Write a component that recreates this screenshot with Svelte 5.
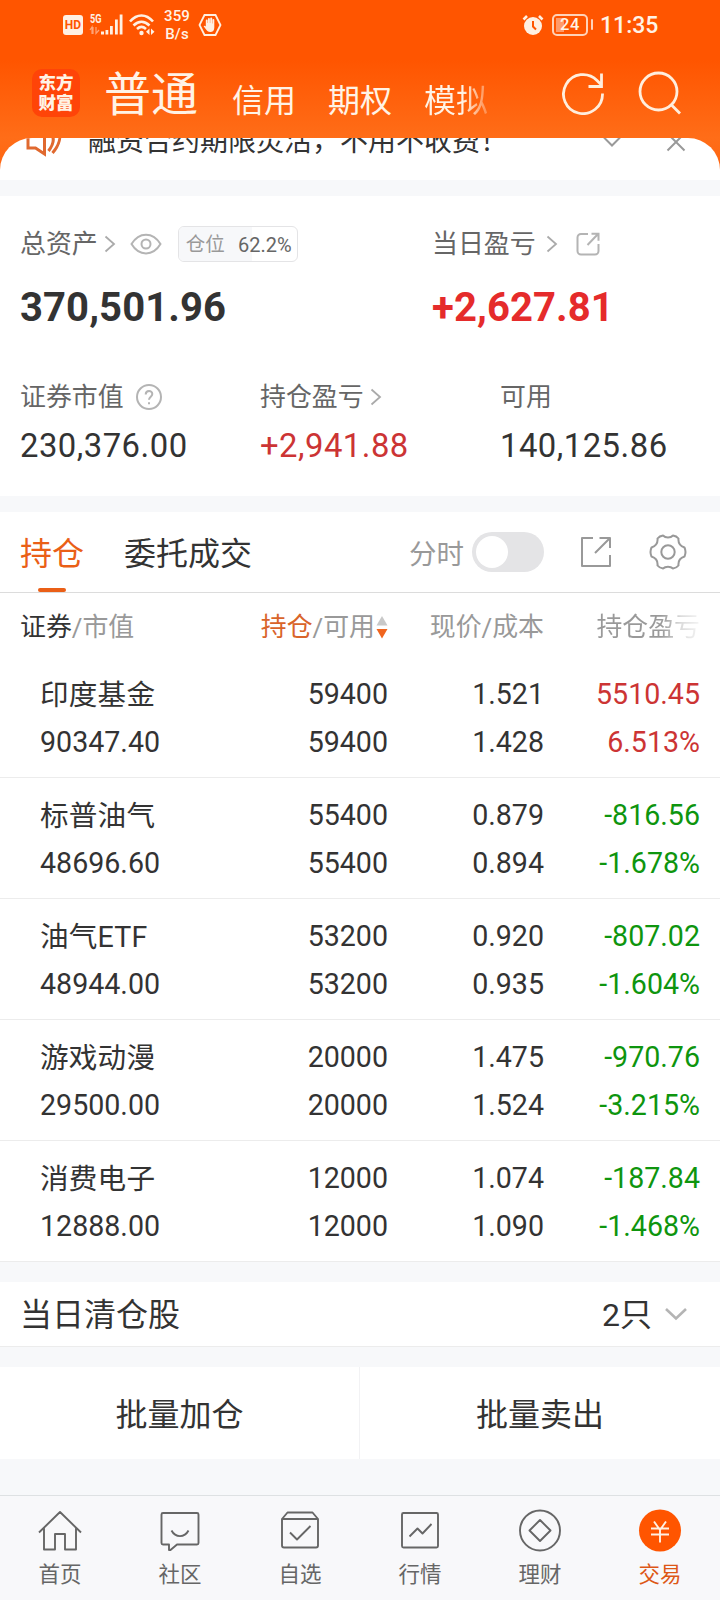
<script lang="ts">
  type Holding = {
    name: string;
    value: string;
    amount: string;
    available: string;
    price: string;
    cost: string;
    profit: string;
    percent: string;
  };

  const accounts = ["信用", "期权", "模拟"];
  const ratio = 62.2;

  const holdings: Holding[] = [
    { name: "印度基金", value: "90347.40", amount: "59400", available: "59400", price: "1.521", cost: "1.428", profit: "5510.45", percent: "6.513%" },
    { name: "标普油气", value: "48696.60", amount: "55400", available: "55400", price: "0.879", cost: "0.894", profit: "-816.56", percent: "-1.678%" },
    { name: "油气ETF", value: "48944.00", amount: "53200", available: "53200", price: "0.920", cost: "0.935", profit: "-807.02", percent: "-1.604%" },
    { name: "游戏动漫", value: "29500.00", amount: "20000", available: "20000", price: "1.475", cost: "1.524", profit: "-970.76", percent: "-3.215%" },
    { name: "消费电子", value: "12888.00", amount: "12000", available: "12000", price: "1.074", cost: "1.090", profit: "-187.84", percent: "-1.468%" },
  ];

  const navItems = [
    { id: "home", label: "首页" },
    { id: "community", label: "社区" },
    { id: "watchlist", label: "自选" },
    { id: "market", label: "行情" },
    { id: "wealth", label: "理财" },
    { id: "trade", label: "交易" },
  ];

  let current = "trade";
  let showChart = false;
</script>

{#snippet arrow()}
  <svg class="arrow" width="12" height="18" viewBox="0 0 12 18">
    <path d="M1.5 1.5 10 9l-8.500 7.500" />
  </svg>
{/snippet}

<div class="page">
  <header class="header">
    <div class="status">
      <div class="status-left">
        <span class="hd">HD</span>
        <svg class="signal" width="34" height="24" viewBox="0 0 34 24">
          <text x="0" y="10" font-size="12.500" font-weight="700" textLength="11.500" lengthAdjust="spacingAndGlyphs">5G</text>
          <path class="dim" d="M0 17l2-3v6.500h1v-6.500M6 14v6.500l3-3.500" />
          <path d="M11 18.500h3v3h-3zM15.500 17h2.800v4.500h-2.800zM20 13h2.800v8.500h-2.800zM25 6.500h2.800v15H25zM29.700 1.500h2.800v20h-2.800z" />
        </svg>
        <svg class="wifi" width="26" height="22" viewBox="0 0 26 22">
          <path class="line" d="M1 7.500C8-.5 17-.5 24 7.500M4.500 11.500c5-5 11-5 16 0M8 15c3-2.700 6-2.700 9 0" />
          <circle cx="12.500" cy="19" r="2.200" />
          <path d="M20.500 14.500v6.500L17 17.800zM22 14.500v6.500l3.500-3.200z" />
        </svg>
        <span class="speed"><span>359</span><span>B/s</span></span>
        <svg class="hand" width="24" height="24" viewBox="0 0 24 24">
          <path class="line thin" d="M6.500 2h11L22.500 12l-5 10h-11L1.500 12z" />
          <path d="M7.800 12.500V7.500a.9.900 0 0 1 1.800 0V10h.3V6a1 1 0 0 1 2 0v4h.3V5.500a1 1 0 0 1 2 0V10.500h.3V7a.9.900 0 0 1 1.800 0V14.500c0 3-1.500 4.500-4 4.500-2.200 0-3.200-1-4.200-2.500L5.600 13.300c.5-1 1.500-.8 2.200.2z" />
        </svg>
      </div>
      <div class="status-right">
        <svg width="22" height="22" viewBox="0 0 22 22">
          <circle cx="11" cy="12" r="9" />
          <path class="line" d="M1.500 5.500 5 2M17 2l3.500 3.500" />
          <path class="hands" d="M11 7v5.500l3 3" />
        </svg>
        <span class="battery">24</span>
        <span class="tip"></span>
        <span class="time">11:35</span>
      </div>
    </div>
    <div class="title-bar">
      <div class="logo"><span>东方</span><span>财富</span></div>
      <nav class="accounts">
        <span class="account active">普通</span>
        {#each accounts as account}
          <span class="account">{account}</span>
        {/each}
      </nav>
      <svg width="44" height="44" viewBox="0 0 44 44">
        <path class="icon-line" d="M40.500 22.500A19.500 19.500 0 1 1 35 9.500l4.500 4.500M26.500 15.500H39.500V2.500" />
      </svg>
      <svg class="search" width="44" height="46" viewBox="0 0 44 46">
        <circle class="icon-line" cx="20.500" cy="21.500" r="18.500" />
        <path class="icon-line" d="M33.500 35l8.500 8.500" />
      </svg>
    </div>
  </header>

  <div class="notice-wrap">
    <div class="notice">
      <div class="notice-row">
        <svg width="36" height="32" viewBox="0 0 36 32">
          <path class="speaker" d="M2 6h7.500l9-6v28l-9-6H2zM24 7c4.500 4 4.500 10-1.500 18M32.500 3c3 7 1 16-6 24" />
        </svg>
        <p>融资合约期限灵活，不用不收费！</p>
        <svg class="grey fold" width="18" height="12" viewBox="0 0 18 12"><path d="M1 1.500l8 8 8-8" /></svg>
        <svg class="grey" width="20" height="20" viewBox="0 0 20 20"><path d="M1.500 1.500l17 17M18.500 1.500l-17 17" /></svg>
      </div>
    </div>
  </div>

  <section class="summary">
    <div class="totals">
      <div>
        <div class="label">
          总资产{@render arrow()}
          <svg class="eye" width="32" height="22" viewBox="0 0 32 22">
            <path d="M1.500 11C9-1.500 23-1.500 30.500 11 23 23.500 9 23.500 1.500 11z" />
            <circle cx="16" cy="11" r="4.500" />
          </svg>
          <span class="position">
            <span class="fill" style="width: {ratio}%"></span>
            <em>仓位</em><b>{ratio}%</b>
          </span>
        </div>
        <div class="total">370,501.96</div>
      </div>
      <div>
        <div class="label daily">
          当日盈亏{@render arrow()}
          <svg class="share" width="24" height="24" viewBox="0 0 24 24">
            <path d="M12 2H5a3.500 3.500 0 0 0-3.500 3.500v13.500A3.500 3.500 0 0 0 5 22.500h14a3.500 3.500 0 0 0 3.500-3.500v-7M11.500 13 22 2M15.500 1.700h7v7" />
          </svg>
        </div>
        <div class="total up">+2,627.81</div>
      </div>
    </div>
    <div class="details">
      <div>
        <div class="label">
          证券市值
          <svg class="help" width="26" height="26" viewBox="0 0 26 26">
            <circle cx="13" cy="13" r="12" />
            <path d="M9.700 10.500c0-4.500 6.600-4.500 6.600-.5 0 2.500-3.300 3-3.300 5.800M13 18.300v2" />
          </svg>
        </div>
        <div class="number">230,376.00</div>
      </div>
      <div>
        <div class="label">持仓盈亏{@render arrow()}</div>
        <div class="number up">+2,941.88</div>
      </div>
      <div>
        <div class="label">可用</div>
        <div class="number">140,125.86</div>
      </div>
    </div>
  </section>

  <section class="positions">
    <div class="tabs">
      <span class="tab selected">持仓</span>
      <span class="tab">委托成交</span>
      <span class="chart-label">分时</span>
      <button
        class="switch"
        class:on={showChart}
        aria-label="分时"
        on:click={() => (showChart = !showChart)}
      ></button>
      <svg class="tool" width="32" height="32" viewBox="0 0 32 32">
        <path d="M13 2H2v28h28V19M30 12V2H19.500M15 17 29.500 2.500" />
      </svg>
      <svg class="tool gear" width="38" height="38" viewBox="0 0 38 38">
        <path d="M14 2.500C16.500 5 21.500 5 24 2.500Q27.500 3 29.500 5.500C29 10 31 13 35.500 14.500Q37.500 19 35.500 23.500C31 25 29 28 29.500 32.500Q27.500 35 24 35.500C21.500 33 16.500 33 14 35.500Q10.500 35 8.500 32.500C9 28 7 25 2.500 23.500Q.5 19 2.500 14.500C7 13 9 10 8.500 5.500Q10.500 3 14 2.500z" />
        <circle cx="19" cy="19" r="6.700" />
      </svg>
    </div>

    <div class="row head">
      <span><i class="dark">证券</i>/市值</span>
      <span class="sorted">
        <i class="hot">持仓</i>/可用
        <svg width="12" height="24" viewBox="0 0 12 24">
          <path fill="#c8c8c8" d="M6 1l5.500 9.500H.5z" />
          <path fill="#f0651e" d="M6 23.500l5.500-9.500H.5z" />
        </svg>
      </span>
      <span>现价/成本</span>
      <span class="fading">持仓盈亏</span>
    </div>

    {#each holdings as item}
      <div class="row holding">
        <div class="name"><span>{item.name}</span><br />{item.value}</div>
        <div>{item.amount}<br />{item.available}</div>
        <div>{item.price}<br />{item.cost}</div>
        <div class={item.profit.startsWith("-") ? "down" : "up"}>
          {item.profit}<br />{item.percent}
        </div>
      </div>
    {/each}
  </section>

  <section class="cleared">
    <span>当日清仓股</span>
    <span class="count">2只</span>
    <svg width="24" height="14" viewBox="0 0 24 14"><path d="M2 2l10 9.500L22 2" /></svg>
  </section>

  <section class="batch">
    <button>批量加仓</button>
    <button>批量卖出</button>
  </section>

  <nav class="bottom">
    {#each navItems as item}
      <button class:current={current === item.id} on:click={() => (current = item.id)}>
        <svg width="44" height="44" viewBox="0 0 44 44">
          {#if item.id === "home"}
            <path d="M1 23.500 22 3l21 20.500M6 19v21.500h11V25h10v15.500h11V19" />
          {:else if item.id === "community"}
            <path d="M5 4h34q1.500 0 1.500 1.500v28.500q0 1.500-1.500 1.500H19L12.500 41h-1.500v-5.500H5q-1.500 0-1.500-1.500V5.500Q3.500 4 5 4zM13.500 21.500c4 7.500 13 7.500 17 0" />
          {:else if item.id === "watchlist"}
            <path d="M4 10v26.500q0 2 2 2h32q2 0 2-2V10zM4 10l5.500-6.500h25L40 10M12 23.500l7 7 13.500-13.500" />
          {:else if item.id === "market"}
            <path d="M5.500 4h33q1.500 0 1.500 1.500v31.500q0 1.500-1.500 1.500h-33Q4 38.500 4 37V5.500Q4 4 5.500 4zM11.500 27.500l8-8 5 5 9-9.500" />
          {:else if item.id === "wealth"}
            <circle cx="22" cy="21.500" r="20" />
            <path d="M22 11 32.500 21.500 22 32 11.500 21.500z" />
          {:else}
            <circle class="coin" cx="22" cy="21.500" r="21" />
            <path class="yen" d="M16 12.500l6 8.500 6-8.500M13 19.500h18M13 25.500h18M22 20v13.500" />
          {/if}
        </svg>
        <span>{item.label}</span>
      </button>
    {/each}
  </nav>
</div>

<style>
  :global(body) {
    background: #f7f8fa;
  }

  .page {
    width: 720px;
    height: 1600px;
    overflow: hidden;
    display: flex;
    flex-direction: column;
    background: #f7f8fa;
    color: #333;
    font-family: Roboto, "Noto Sans CJK SC", sans-serif;
  }

  svg {
    flex: none;
    display: block;
  }

  button {
    padding: 0;
    border: 0;
    background: none;
    color: inherit;
    font: inherit;
  }

  .header {
    height: 138px;
    background: linear-gradient(#ff5500 60px, #ff6d18 138px);
    color: #fff3e6;
  }

  .status {
    box-sizing: border-box;
    height: 48px;
    padding: 1px 65px 0 63px;
    display: flex;
    justify-content: space-between;
    align-items: center;
    fill: #fff0e2;
  }

  .status-left,
  .status-right {
    display: flex;
    align-items: center;
  }

  .hd {
    width: 20px;
    margin-right: 7px;
    border-radius: 3px;
    background: #fff0e2;
    color: #ff5500;
    font-size: 12px;
    font-weight: 700;
    line-height: 20px;
    text-align: center;
  }

  .signal {
    overflow: visible;
  }

  .line {
    fill: none;
    stroke: #fff0e2;
    stroke-width: 2.6;
  }

  .thin {
    stroke-width: 1.8;
  }

  .dim {
    fill: none;
    stroke: #ffa477;
    stroke-width: 1.2;
  }

  .wifi {
    margin: 0 8px 0 5px;
  }

  .speed {
    width: 28px;
    display: flex;
    flex-direction: column;
    font-size: 15px;
    font-weight: 500;
    line-height: 18px;
    letter-spacing: 0.2px;
    text-align: center;
  }

  .hand {
    margin-left: 7px;
  }

  .hands {
    fill: none;
    stroke: #ff5500;
    stroke-width: 2;
  }

  .battery {
    box-sizing: border-box;
    width: 36px;
    height: 22px;
    margin-left: 8px;
    border: 2px solid #ffd2b8;
    border-radius: 5px;
    background: linear-gradient(90deg, #ff9a69 8px, transparent 8px) no-repeat 2px 2px / 28px 14px;
    font-size: 16.500px;
    font-weight: 500;
    line-height: 18px;
    letter-spacing: 0.5px;
    text-align: center;
  }

  .tip {
    width: 2px;
    height: 11px;
    margin: 0 7px 0 3px;
    border-radius: 1px;
    background: #ffd2b8;
  }

  .time {
    width: 55px;
    padding-top: 2px;
    font-size: 23px;
    font-weight: 500;
    white-space: nowrap;
  }

  .title-bar {
    height: 90px;
    padding: 0 38px 0 32px;
    display: flex;
    align-items: center;
  }

  .logo {
    width: 48px;
    height: 48px;
    border-radius: 10px;
    background: #ff4408;
    display: flex;
    flex-direction: column;
    justify-content: center;
    align-items: center;
    font-size: 17.500px;
    font-weight: 900;
    line-height: 20px;
  }

  .accounts {
    flex: 1;
    padding: 9px 0 0 24px;
    display: flex;
    align-items: baseline;
    gap: 32px;
    font-size: 32px;
    line-height: 64px;
  }

  .account {
    padding-top: 2px;
  }

  .account.active {
    margin-right: 2px;
    padding-top: 0;
    font-size: 47px;
  }

  .account:not(.active) {
    position: relative;
    top: 1px;
  }

  .account:last-child {
    background: linear-gradient(90deg, #fff3e6 60%, #ff8a48);
    background-clip: text;
    color: transparent;
  }

  .icon-line {
    fill: none;
    stroke: #ffeedd;
    stroke-width: 2.8;
  }

  .search {
    margin-left: 32px;
  }

  .notice-wrap {
    background: linear-gradient(#ff6d18, #ff6510 32px, #fff 32px);
  }

  .notice {
    height: 42px;
    overflow: hidden;
    border-radius: 32px 32px 0 0;
    background: #fff;
  }

  .notice-row {
    height: 60px;
    margin-top: -26px;
    padding: 0 34px 0 26px;
    display: flex;
    align-items: center;
  }

  .notice-row p {
    flex: 1;
    margin: 0 0 0 26px;
    font-size: 28px;
    line-height: 40px;
  }

  .speaker {
    fill: none;
    stroke: #e0692f;
    stroke-width: 3;
  }

  .grey {
    fill: none;
    stroke: #999;
    stroke-width: 2;
  }

  .fold {
    margin-right: 45px;
  }

  .summary {
    box-sizing: border-box;
    height: 300px;
    margin-top: 16px;
    padding: 30px 20px 0;
    background: #fff;
  }

  .totals {
    display: grid;
    grid-template-columns: 412px 1fr;
  }

  .details {
    margin-top: 48px;
    display: grid;
    grid-template-columns: 240px 240px 1fr;
  }

  .label {
    height: 36px;
    display: flex;
    align-items: center;
    color: #666;
    font-size: 25.900px;
    line-height: 38px;
    white-space: nowrap;
  }

  .arrow {
    margin-left: 6px;
    fill: none;
    stroke: #aaa;
    stroke-width: 1.8;
  }

  .daily .arrow {
    margin-left: 10px;
  }

  .eye {
    margin-left: 14px;
  }

  .eye,
  .share,
  .help {
    fill: none;
    stroke: #b4b4b4;
    stroke-width: 2;
  }

  .share {
    margin-left: 18px;
  }

  .help {
    margin-left: 12px;
  }

  .position {
    position: relative;
    box-sizing: border-box;
    width: 120px;
    height: 36px;
    margin-left: 16px;
    padding: 0 5px 0 7px;
    border: 1px solid #e4e4e6;
    border-radius: 6px;
    overflow: hidden;
    display: flex;
    justify-content: space-between;
    align-items: center;
    font-size: 19.500px;
  }

  .fill {
    position: absolute;
    top: 0;
    bottom: 0;
    left: 0;
    background: #f7f8fa;
  }

  .position em,
  .position b {
    position: relative;
    padding-top: 1px;
    font-style: normal;
    font-weight: 400;
  }

  .position em {
    color: #999;
  }

  .position b {
    font-size: 20px;
  }

  .total {
    margin-top: 22px;
    margin-bottom: -1px;
    font-size: 40px;
    font-weight: 700;
    line-height: 48px;
    letter-spacing: 0.1px;
  }

  .total.up {
    color: #e52b2b;
  }

  .number {
    margin-top: 11px;
    font-size: 32.800px;
    line-height: 41px;
    letter-spacing: 0.5px;
  }

  .up {
    color: #cc3434;
  }

  .down {
    color: #0e950e;
  }

  .positions {
    margin-top: 16px;
    background: #fff;
  }

  .tabs {
    height: 80px;
    padding: 0 33px 0 20px;
    border-bottom: 1px solid #dcdcdc;
    display: flex;
    align-items: center;
    font-size: 32px;
  }

  .tab {
    position: relative;
    height: 80px;
    margin-right: 40px;
    line-height: 84px;
  }

  .selected {
    color: #ea5f17;
  }

  .selected::after {
    content: "";
    position: absolute;
    bottom: 0;
    left: 18px;
    width: 28px;
    height: 4px;
    border-radius: 2px;
    background: #ea5f17;
  }

  .chart-label {
    margin-left: auto;
    color: #999;
    font-size: 27.500px;
  }

  .switch {
    width: 72px;
    height: 40px;
    margin: 0 36px 0 8px;
    padding: 4px;
    border-radius: 20px;
    background: #e4e4e6;
    display: flex;
  }

  .switch::before {
    content: "";
    width: 32px;
    height: 32px;
    border-radius: 50%;
    background: #fff;
  }

  .switch.on {
    justify-content: flex-end;
    background: #ea5f17;
  }

  .tool {
    fill: none;
    stroke: #999;
    stroke-width: 2;
    stroke-linejoin: round;
  }

  .gear {
    margin-left: 37px;
  }

  .row {
    padding: 0 20px;
    display: grid;
    grid-template-columns: 200px 168px 156px 156px;
    text-align: right;
    white-space: nowrap;
  }

  .row > :first-child {
    text-align: left;
  }

  .head {
    height: 64px;
    color: #999;
    font-size: 25.900px;
    line-height: 68px;
  }

  .head i {
    font-style: normal;
  }

  .dark {
    color: #333;
  }

  .hot {
    color: #d9642a;
  }

  .sorted {
    display: flex;
    justify-content: flex-end;
    align-items: center;
  }

  .sorted svg {
    margin-left: 1px;
  }

  .fading {
    background: linear-gradient(90deg, #999 75%, #dcdcdc 88%, #f4f4f4);
    background-clip: text;
    color: transparent;
  }

  .holding {
    padding-top: 13px;
    padding-bottom: 11px;
    border-bottom: 1px solid #ececec;
    font-size: 28.600px;
    line-height: 48px;
  }

  .name {
    padding-left: 20px;
  }

  .name span {
    position: relative;
    top: 1px;
    letter-spacing: 0.2px;
  }

  .cleared {
    height: 64px;
    margin-top: 20px;
    padding: 0 32px 0 20px;
    border-bottom: 1px solid #ececec;
    background: #fff;
    display: flex;
    align-items: center;
    font-size: 32px;
    line-height: 67px;
  }

  .cleared span {
    height: 64px;
  }

  .cleared svg {
    margin-left: 12px;
    fill: none;
    stroke: #b4b4b4;
    stroke-width: 2.6;
  }

  .count {
    margin-left: auto;
  }

  .batch {
    height: 92px;
    margin-top: 20px;
    background: #fff;
    display: grid;
    grid-template-columns: 360px 360px;
    font-size: 32px;
  }

  .batch button {
    padding-bottom: 2px;
  }

  .batch button:first-child {
    border-right: 1px solid #f2f2f4;
  }

  .bottom {
    height: 104px;
    margin-top: auto;
    border-top: 1px solid #dee1e3;
    background: #f8f8fa;
    display: grid;
    grid-template-columns: repeat(6, 1fr);
    color: #666;
    font-size: 21.500px;
    line-height: 30px;
  }

  .bottom button {
    padding-top: 13px;
    display: flex;
    flex-direction: column;
    align-items: center;
    gap: 7px;
  }

  .bottom svg {
    fill: none;
    stroke: #666;
    stroke-width: 1.9;
    stroke-linejoin: round;
  }

  .bottom .current {
    color: #dd5716;
  }

  .bottom .coin {
    fill: #ff5500;
    stroke: none;
  }

  .bottom .yen {
    stroke: #fff0e2;
  }
</style>
